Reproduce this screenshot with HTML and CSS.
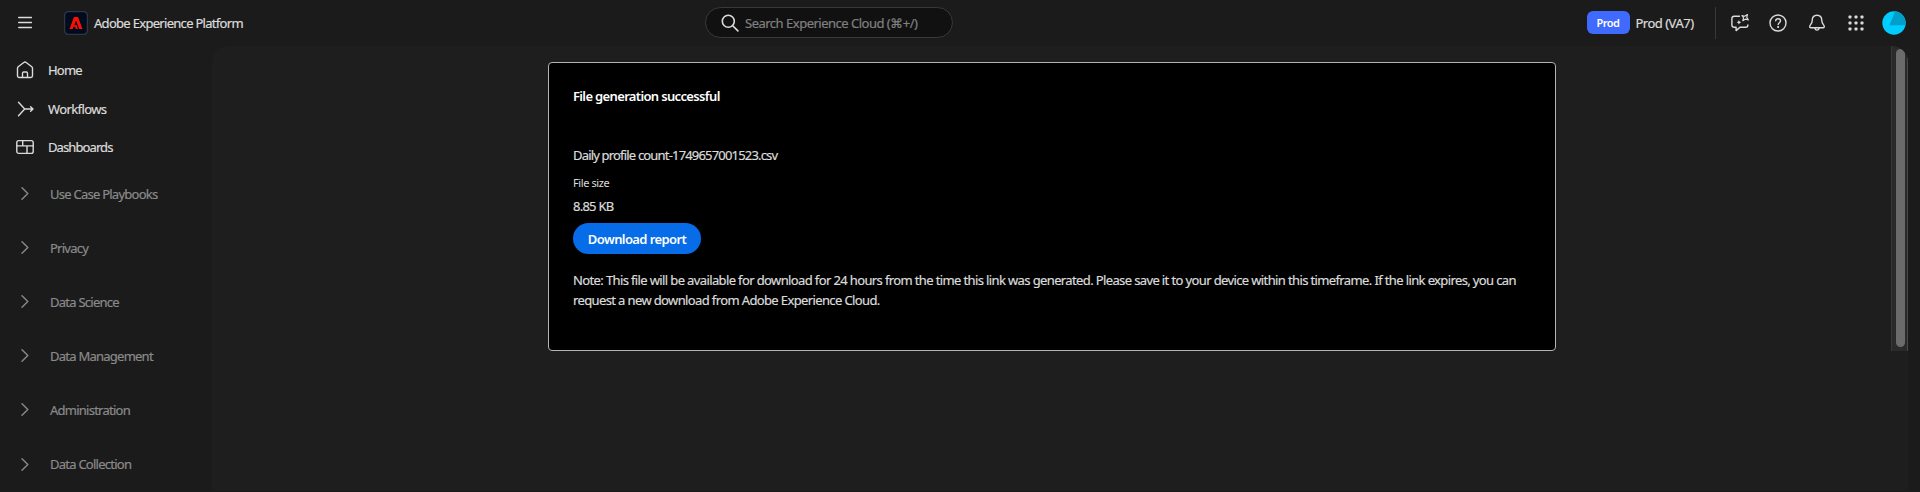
FILE: index.html
```html
<!DOCTYPE html>
<html lang="en">
<head>
<meta charset="utf-8">
<title>Adobe Experience Platform</title>
<link rel="stylesheet" href="styles.css">
</head>
<body>
<header class="topbar">
  <div class="brand">
    <svg class="menu-icon" width="14" height="13" viewBox="0 0 14 13"><path d="M.7 1.500h12.800M.7 6.500h12.800M.7 11.500h12.800"/></svg>
    <svg class="logo" width="24" height="24" viewBox="0 0 24 24"><rect x=".5" y=".5" width="23" height="23" rx="4.500" fill="#000b1d" stroke="#303743"/><path d="M9.900 6h4.200L18.500 18h-3.300L12 9.500l-1.700 4.600h2.200L14 18h-2.100l-.9-2.200H9.400L8.700 18H5.500z" fill="#fa0f00"/></svg>
    <span class="brand-name">Adobe Experience Platform</span>
  </div>
  <div class="search">
    <svg width="18" height="18" viewBox="0 0 18 18"><circle cx="7.300" cy="7.300" r="6"/><path d="M11.700 11.700l5.200 5.200"/></svg>
    <span class="search-hint">Search Experience Cloud (⌘+/)</span>
  </div>
  <div class="tools">
    <span class="badge">Prod</span>
    <span class="sandbox">Prod (VA7)</span>
    <span class="divider"></span>
    <svg class="tool chat" width="20" height="20" viewBox="0 0 20 20"><path d="M9.500 3.300H4.200a2.300 2.300 0 0 0-2.300 2.300v6.300a2.300 2.300 0 0 0 2.300 2.300h1.900v3.400l3.900-3.400h5.600a2.300 2.300 0 0 0 2.300-2.300"/><path class="spark" d="M12 2.500l2.500.8L17.500 1.600l-.8 2.700 1.600 2.600-2.700-.8-2.800 1.600.8-2.700z"/><path class="dot" d="M8.800 7.200l.9 1.300 1.500.7-1.400.8-.9 1.400-.8-1.400-1.400-.8 1.500-.7z"/></svg>
    <svg class="tool help" width="20" height="20" viewBox="0 0 20 20"><circle cx="10" cy="10" r="8"/><path d="M7.700 7.800c.2-2.800 4.800-2.700 4.800 0 0 1.900-2.300 1.900-2.300 3.700"/><circle class="dot" cx="10.100" cy="14" r="1.100"/></svg>
    <svg class="tool bell" width="20" height="20" viewBox="0 0 20 20"><path d="M10 2.300c-3 0-4.800 2.300-4.800 5.300 0 3.300-2.500 4-2.500 6.100 0 .7.400 1 1 1h12.600c.6 0 1-.3 1-1 0-2.100-2.500-2.800-2.500-6.100 0-3-1.800-5.300-4.800-5.300zM8 15v.6c.5 1.900 3.500 1.900 4 0V15"/></svg>
    <svg class="apps" width="16" height="16" viewBox="0 0 16 16"><g id="r"><rect x=".5" y=".5" width="3" height="3" rx=".8"/><rect x="6.500" y=".5" width="3" height="3" rx=".8"/><rect x="12.500" y=".5" width="3" height="3" rx=".8"/></g><use href="#r" y="6"/><use href="#r" y="12"/></svg>
    <svg class="avatar" width="24" height="24" viewBox="0 0 24 24"><circle cx="12" cy="12" r="11.700" fill="#00cdff"/><path d="M12.500 1.500 7.500 14.300h15.900A11.700 11.700 0 0 0 13 .35z" fill="#009fc9"/></svg>
  </div>
</header>
<div class="shell">
  <nav class="sidebar">
    <ul class="primary">
      <li><svg width="18" height="18" viewBox="0 0 18 18"><path d="M1.500 7.300c0-.6.300-1.100.7-1.500L7.800 1.500a2 2 0 0 1 2.400 0l5.600 4.300c.4.400.7.900.7 1.500v7.500a1.700 1.700 0 0 1-1.700 1.700h-3.300v-4.300a1.200 1.200 0 0 0-1.200-1.200H7.700a1.200 1.200 0 0 0-1.200 1.200v4.300H3.200a1.700 1.700 0 0 1-1.700-1.700zM6.500 16.500h5"/></svg><span class="home">Home</span></li>
      <li><svg width="18" height="18" viewBox="0 0 18 18"><path d="M2.500 2.200l6.200 6.800-6.200 6.800M8.700 9h8.300M14.600 6.800 17 9l-2.400 2.200"/></svg><span class="flows">Workflows</span></li>
      <li><svg width="18" height="18" viewBox="0 0 18 18"><rect x=".8" y="2.600" width="16.400" height="12.800" rx="2"/><path d="M.8 7.900h16.400M6.700 2.600v5.300M11 7.900v7.500"/></svg><span class="boards">Dashboards</span></li>
    </ul>
    <ul class="groups">
      <li><svg width="8" height="13" viewBox="0 0 8 13"><path d="M1 .8l5.800 5.700L1 12.200"/></svg><span>Use Case Playbooks</span></li>
      <li><svg width="8" height="13" viewBox="0 0 8 13"><path d="M1 .8l5.800 5.700L1 12.200"/></svg><span>Privacy</span></li>
      <li><svg width="8" height="13" viewBox="0 0 8 13"><path d="M1 .8l5.800 5.700L1 12.200"/></svg><span>Data Science</span></li>
      <li><svg width="8" height="13" viewBox="0 0 8 13"><path d="M1 .8l5.800 5.700L1 12.200"/></svg><span>Data Management</span></li>
      <li><svg width="8" height="13" viewBox="0 0 8 13"><path d="M1 .8l5.800 5.700L1 12.200"/></svg><span>Administration</span></li>
      <li><svg width="8" height="13" viewBox="0 0 8 13"><path d="M1 .8l5.800 5.700L1 12.200"/></svg><span>Data Collection</span></li>
    </ul>
  </nav>
  <main class="content">
    <section class="card">
      <h1 class="title">File generation successful</h1>
      <p class="filename">Daily profile count-1749657001523.csv</p>
      <p class="label">File size</p>
      <p class="size">8.85 KB</p>
      <button class="download">Download report</button>
      <p class="note">Note: This file will be available for download for 24 hours from the time this link was generated. Please save it to your device within this timeframe. If the link expires, you can<br>request a new download from Adobe Experience Cloud.</p>
    </section>
    <div class="scroll-track"><div class="scroll-thumb"></div></div>
  </main>
</div>
</body>
</html>
```
FILE: styles.css
```css
* { box-sizing: border-box; }
body {
  margin: 0;
  height: 492px;
  overflow: hidden;
  background: #1b1b1b;
  color: #dbdbdb;
  font: 13px/20px "Noto Sans", "Open Sans", sans-serif;
  letter-spacing: -0.5px;
  white-space: nowrap;
  -webkit-text-stroke: 0.2px;
}
ul, p, h1 { margin: 0; padding: 0; list-style: none; }
svg { display: block; flex: none; fill: none; stroke: #dbdbdb; stroke-width: 1.4; stroke-linejoin: round; stroke-linecap: round; }
.dot { fill: #dbdbdb; stroke: none; }
.spark { stroke-width: 1.2; }

.topbar { display: grid; grid-template-columns: 705px 248px 1fr; height: 46px; }
.brand { display: flex; align-items: center; height: 45px; padding-left: 18px; }
.brand-name { letter-spacing: -0.7px; }
.logo { margin: 0 6px 0 32px; stroke: none; }
.search {
  display: flex; align-items: center; gap: 6px;
  height: 31px; margin-top: 7px; padding-left: 15px;
  border: 1.5px solid #393939; border-radius: 16px; background: #111;
}
.search svg { stroke-width: 1.6; }
.search-hint { color: #808080; }
.tools { display: flex; align-items: center; height: 45px; padding-right: 14px; justify-content: flex-end; }
.badge {
  width: 43px; height: 23px; margin-right: 6px; border-radius: 6px;
  background: #4069fd; color: #fff; text-align: center;
  font-size: 11px; font-weight: 600; line-height: 23px; letter-spacing: -0.5px;
  -webkit-text-stroke: 0;
}
.sandbox { width: 79px; }
.divider { width: 1px; height: 32px; background: #393939; margin-right: 14px; }
.tool { margin-right: 18.5px; }
.bell { margin-right: 21.5px; }
.apps { margin-right: 18px; stroke: none; fill: #dbdbdb; }
.avatar { stroke: none; }

.shell { display: grid; grid-template-columns: 212px 1696px; height: 441px; }
.primary { padding-top: 4.5px; }
.primary li { display: flex; align-items: center; gap: 14px; height: 38.7px; padding-left: 16px; }
.home { letter-spacing: -0.8px; }
.flows { letter-spacing: -0.6px; }
.boards { letter-spacing: -0.9px; }
.groups { color: #8a8a8a; letter-spacing: -0.75px; }
.groups li { display: flex; align-items: center; gap: 21px; height: 54.1px; padding-left: 21px; }
.groups svg { stroke: #8a8a8a; }

.content {
  display: flex; justify-content: space-between; padding-left: 336px;
  background: #1e1e1e; border-radius: 16px 16px 0 0; overflow: hidden;
}
.card {
  width: 1008px; height: 289px; margin-top: 16px; padding: 22.5px 24px;
  border: 1px solid #b4b4b4; border-radius: 4px; background: #000;
}
.title { font-size: 13px; line-height: 20px; font-weight: 600; color: #fff; letter-spacing: -0.65px; -webkit-text-stroke: 0; }
.filename { margin-top: 39px; letter-spacing: -0.82px; }
.label { margin-top: 8.5px; font-size: 11px; letter-spacing: -0.4px; -webkit-text-stroke: 0; }
.size { margin-top: 2.5px; letter-spacing: -0.75px; }
.download {
  display: block; width: 128px; height: 31px; margin-top: 7.5px; padding: 0;
  border: 0; border-radius: 16px; background: #066ce7; color: #fff;
  font: 600 13px/28px "Noto Sans", sans-serif; letter-spacing: -0.6px; -webkit-text-stroke: 0;
}
.note { margin-top: 16px; line-height: 20.3px; letter-spacing: -0.625px; }
.scroll-track {
  width: 17px; height: 305px; padding: 3px 3px 4px 4px;
  border-left: 1px solid #393939; border-right: 1px solid #484848; background: #2a2a2a;
}
.scroll-thumb { width: 9px; height: 298px; border-radius: 5px; background: #6b6b6b; }
```
